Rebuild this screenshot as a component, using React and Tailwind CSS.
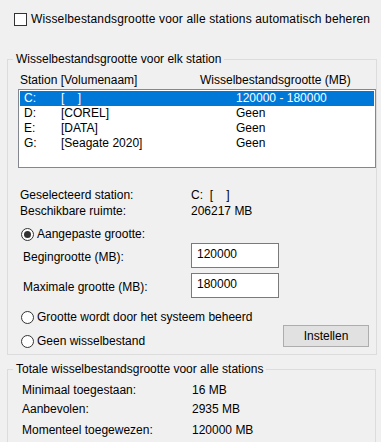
import React from 'react';

const drives = [
  { letter: 'C:', name: '[    ]', size: '120000 - 180000', selected: true },
  { letter: 'D:', name: '[COREL]', size: 'Geen' },
  { letter: 'E:', name: '[DATA]', size: 'Geen' },
  { letter: 'G:', name: '[Seagate 2020]', size: 'Geen' },
];

const Radio = ({ checked, label }) => (
  <div className="flex items-center h-[16px] pl-[21px] gap-[3px]">
    <span className="w-[13px] h-[13px] rounded-full border border-[#333] bg-white flex items-center justify-center">
      {checked && <span className="w-[7px] h-[7px] rounded-full bg-[#333]" />}
    </span>
    <span>{label}</span>
  </div>
);

const SizeField = ({ label, value, className = '' }) => (
  <div className={`flex h-[25px] ${className}`}>
    <span className="w-[191px] pl-[23px] pt-[6px]">{label}</span>
    <div className="w-[88px] h-[25px] border border-[#7a7a7a] bg-white pl-[5px] pt-[2px]">{value}</div>
  </div>
);

export default function App() {
  return (
    <div
      className="w-[381px] h-[442px] overflow-hidden bg-[#f0f0f0] text-black text-[12px] leading-[16px] pt-[11px]"
      style={{ fontFamily: '"Liberation Sans", Arial, sans-serif' }}
    >
      {/* automatisch beheren */}
      <div className="flex items-center h-[16px] pl-[14px] gap-[4px] whitespace-nowrap">
        <span className="shrink-0 w-[13px] h-[13px] border border-[#333] bg-white" />
        <span className="tracking-[0.15px]">Wisselbestandsgrootte voor alle stations automatisch beheren</span>
      </div>

      {/* per station */}
      <fieldset className="mt-[24px] ml-[7px] w-[369px] border border-[#dcdcdc] pb-[5px]">
        <legend className="ml-[5px] px-[3px] leading-[16px]">Wisselbestandsgrootte voor elk station</legend>

        <div className="flex h-[15px] mt-[5px] pl-[12px]">
          <span className="w-[180px]">Station [Volumenaam]</span>
          <span>Wisselbestandsgrootte (MB)</span>
        </div>

        <div className="mt-[2px] ml-[10px] w-[358px] h-[79px] border border-[#828790] bg-white p-[1px]">
          {drives.map((d) => (
            <div
              key={d.letter}
              className={`flex h-[15px] leading-[15px] pl-[4px] whitespace-pre ${d.selected ? 'bg-[#0078d7] text-white' : ''}`}
            >
              <span className="w-[37px]">{d.letter}</span>
              <span className="w-[175px]">{d.name}</span>
              <span>{d.size}</span>
            </div>
          ))}
        </div>

        <div className="mt-[19px] pl-[12px]">
          <div className="flex h-[16px]">
            <span className="w-[171px]">Geselecteerd station:</span>
            <span className="whitespace-pre">C:  [    ]</span>
          </div>
          <div className="flex h-[16px]">
            <span className="w-[171px]">Beschikbare ruimte:</span>
            <span>206217 MB</span>
          </div>
        </div>

        <div className="mt-[7px] -ml-[8px]">
          <Radio checked label="Aangepaste grootte:" />
        </div>

        <div className="-ml-[8px]">
          <SizeField className="mt-[1px]" label="Begingrootte (MB):" value="120000" />
          <SizeField className="mt-[5px]" label="Maximale grootte (MB):" value="180000" />
        </div>

        <div className="mt-[11px] -ml-[8px]">
          <Radio label="Grootte wordt door het systeem beheerd" />
        </div>

        <div className="flex justify-between items-end h-[24px] -ml-[8px]">
          <Radio label="Geen wisselbestand" />
          <button className="self-start mr-[7px] w-[86px] h-[22px] bg-[#e1e1e1] border border-[#adadad] text-black">
            Instellen
          </button>
        </div>
      </fieldset>

      {/* totaal */}
      <fieldset className="mt-[6px] ml-[7px] w-[369px] border border-[#dcdcdc] pb-[10px]">
        <legend className="ml-[5px] px-[3px] leading-[16px]">Totale wisselbestandsgrootte voor alle stations</legend>
        <div className="pl-[14px]">
          <div className="flex h-[16px] mt-[5px]">
            <span className="w-[170px]">Minimaal toegestaan:</span>
            <span>16 MB</span>
          </div>
          <div className="flex h-[16px] mt-[3px]">
            <span className="w-[170px]">Aanbevolen:</span>
            <span>2935 MB</span>
          </div>
          <div className="flex h-[16px] mt-[5px]">
            <span className="w-[170px]">Momenteel toegewezen:</span>
            <span>120000 MB</span>
          </div>
        </div>
      </fieldset>
    </div>
  );
}
